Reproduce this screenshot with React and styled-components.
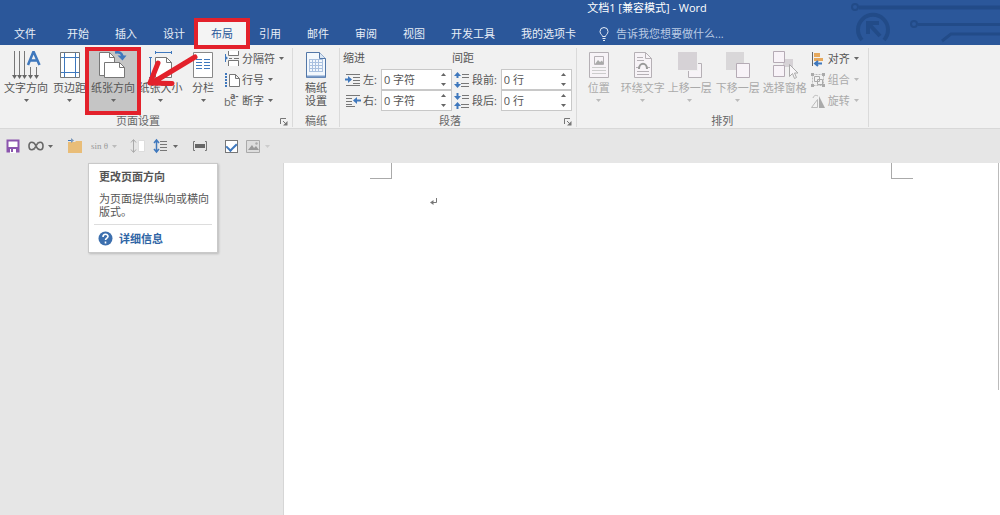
import React from 'react'
import styled, { createGlobalStyle, css } from 'styled-components'

const blue = '#2b579a'
const ink = '#555'
const faded = '#aaa'
const sky = '#3f78bd'

const tabs = ['开始', '插入', '设计', '布局', '引用', '邮件', '审阅', '视图', '开发工具', '我的选项卡']

const Caret = ({ color = '#666' }) => (
  <svg width="5" height="3" viewBox="0 0 5 3"><path d="M0 0h5L2.5 3z" fill={color} /></svg>
)

/* ---------- large icons, 28px box ---------- */
const TextDirection = () => (
  <svg width="30" height="28" viewBox="0 0 30 28" fill="none">
    <path d="M3.500 0v25M8.500 0v25M13.500 0v25M19.500 16v9M25.500 16v9" stroke="#777" />
    <path d="M1 24l2.500 4L6 24zM6 24l2.500 4L11 24zM11 24l2.500 4L16 24zM17 24l2.500 4L22 24zM23 24l2.500 4L28 24z" fill="#666" />
    <path d="M17 14L22.500 0.500 28.500 14M19 9.500h8" stroke={sky} strokeWidth="2.500" />
  </svg>
)
const Margins = () => (
  <svg width="22" height="28" viewBox="0 0 22 28" fill="none">
    <path d="M1.500 1.500h19v25h-19z" fill="#fff" stroke="#777" />
    <path d="M5.500 2v24M16.500 2v24M2 6.500h18M2 21.500h18" stroke={sky} />
  </svg>
)
const Orientation = () => (
  <svg width="30" height="28" viewBox="0 0 30 28" fill="none">
    <path d="M1.500 1.500h10l5 5v18h-15z" fill="#fff" stroke="#777" />
    <path d="M11.500 1.500v5h5" stroke="#777" />
    <path d="M6.500 11.500h15l5 5v10h-20z" fill="#fff" stroke="#777" />
    <path d="M21.500 11.500v5h5" stroke="#777" />
    <path d="M17 1.500c5-1 7 1 7.500 4" stroke={sky} strokeWidth="2.500" />
    <path d="M19.500 4.500h9l-4 5z" fill={sky} />
  </svg>
)
const PaperSize = () => (
  <svg width="26" height="28" viewBox="0 0 26 28" fill="none">
    <path d="M7.500 6.500h11l5 5v15h-16z" fill="#fff" stroke="#777" />
    <path d="M18.500 6.500v5h5" stroke="#777" />
    <path d="M7 1.500h17M7.500 0v3M23.500 0v3M2.500 6v20M1 6.500h3M1 26.500h3" stroke={sky} />
  </svg>
)
const Columns = () => (
  <svg width="22" height="28" viewBox="0 0 22 28" fill="none">
    <path d="M1.500 1.500h19v25h-19z" fill="#fff" stroke="#888" />
    <path d="M4 8.500h6M12 8.500h6M4 11.500h6M12 11.500h6M4 14.500h6M12 14.500h6M4 17.500h6M12 17.500h6" stroke={sky} />
  </svg>
)
const Manuscript = () => (
  <svg width="22" height="28" viewBox="0 0 22 28" fill="none">
    <path d="M1.500 1.500h13l6 6v19h-19z" fill="#f3f8fd" stroke="#5277a8" />
    <path d="M4 8.500h14M4 11.500h14M4 14.500h14M4 17.500h14M4 20.500h14M4.500 8v13M7.500 8v13M10.500 8v13M13.500 8v13M17.500 8v13" stroke="#a9c0df" />
    <path d="M14.500 1.500v6h6" fill="#dce8f5" stroke="#5277a8" />
    <path d="M2 25.500h18" stroke="#7c9dc9" strokeWidth="2" />
  </svg>
)
const Position = () => (
  <svg width="22" height="28" viewBox="0 0 22 28" fill="none">
    <path d="M1.500 1.500h19v25h-19z" fill="#f7f3f7" stroke="#b5b0b5" />
    <path d="M6.500 5.500h9v8h-9z" stroke="#b5b0b5" />
    <path d="M7 13l3-4 2 2 2-1.500 2 3.500z" fill="#aaa" />
    <path d="M4 16.500h14M4 19.500h14M4 22.500h14" stroke="#ccc" />
  </svg>
)
const Wrap = () => (
  <svg width="22" height="28" viewBox="0 0 22 28" fill="none">
    <path d="M2.500 1.500h11l6 6v19h-17z" fill="#f7f3f7" stroke="#b5b0b5" />
    <path d="M13.500 1.500v6h6M5 6.500h6M5 9.500h7M5 20.500h12M5 23.500h12M4 16.500h2M16 16.500h2" stroke="#b5b0b5" />
    <path d="M7 18c0-7 8-7 8 0" stroke="#999" strokeWidth="2" />
  </svg>
)
const Forward = () => (
  <svg width="26" height="28" viewBox="0 0 26 28" fill="none">
    <path d="M11.500 12.500h13v14h-13z" fill="#f7f3f7" stroke="#b5b0b5" />
    <path d="M1 1h20v19H1z" fill="#f1f1f1" />
    <path d="M1 1h19v18H1z" fill="#d6d2d6" />
  </svg>
)
const Backward = () => (
  <svg width="26" height="28" viewBox="0 0 26 28" fill="none">
    <path d="M1 1h18v18H1z" fill="#d9d7d9" />
    <path d="M11.500 12.500h13v14h-13z" fill="#f8f3f8" stroke="#b5abb5" />
  </svg>
)
const Selection = () => (
  <svg width="26" height="28" viewBox="0 0 26 28" fill="none">
    <path d="M11 8h10v8H11z" fill="#d6d2d6" />
    <path d="M1.500 0.500h11v11h-11zM1.500 14.500h11v11h-11z" fill="#f8f3f8" stroke="#b5abb5" />
    <path d="M17.500 13.500v12l3-3 2 5 2-1-2-4.500h3.500z" fill="#f8f6f8" stroke="#aaa" />
  </svg>
)

/* ---------- small icons, 16px box ---------- */
const Small = ({ children }) => <svg width="16" height="16" viewBox="0 0 16 16" fill="none">{children}</svg>

const Breaks = () => (
  <Small>
    <path d="M4.500 0v4.500h10V0M4.500 15v-5.500h10V15" fill="#fff" stroke="#777" />
    <path d="M5 7.500h3M10 7.500h5" stroke="#777" />
    <path d="M1.500 3v8" stroke={sky} /><path d="M1 4.500v5l3-2.500z" fill={sky} />
  </Small>
)
const LineNumbers = () => (
  <Small>
    <path d="M5.500 2.500h6l4 4v8h-10zM11.500 2.500v4h4" fill="#fff" stroke="#777" />
    <path d="M2 1v14" stroke={sky} strokeWidth="2" strokeDasharray="2 1" />
  </Small>
)
const Hyphenation = () => (
  <HyphenIcon width="16" height="16" viewBox="0 0 16 16" fill="#666">
    <text x="0" y="13" fontSize="11">
      bc<tspan x="6" y="6" fontSize="9" fontWeight="bold">a-</tspan>
    </text>
  </HyphenIcon>
)
const Align = () => (
  <Small>
    <path d="M2.500 1v14" stroke="#666" />
    <path d="M4 2h6v4H4zM4 7h9v3H4z" fill="#e6a85c" />
    <path d="M5 12.500h7M8 10l-3 2.500L8 15" stroke={sky} strokeWidth="2" />
  </Small>
)
const GroupIcon = () => (
  <Small>
    <path d="M2.500 2.500h11v11h-11z" stroke="#bbb" strokeDasharray="2 1" />
    <path d="M4.500 4.500h5v5h-5zM7.500 7.500h5v5h-5z" stroke="#aaa" />
    <path d="M1 1h3v3H1zM12 1h3v3h-3zM1 12h3v3H1zM12 12h3v3h-3z" fill="#aaa" />
  </Small>
)
const Rotate = () => (
  <Small>
    <path d="M1.500 14.500h6v-8z" stroke="#bbb" />
    <path d="M9 15V3l6 12z" fill="#aaa" />
    <path d="M3 5c1-3 3-3 5-2" stroke="#bbb" />
  </Small>
)
const IndentLeft = () => (
  <Small>
    <path d="M1 2.500h14M8 5.500h7M8 8.500h7M8 11.500h7M1 13.500h14" stroke="#777" />
    <path d="M0 7.500h5" stroke={sky} strokeWidth="2" /><path d="M3 4l4 3.500L3 11z" fill={sky} />
  </Small>
)
const IndentRight = () => (
  <Small>
    <path d="M1 2.500h14M1 5.500h6M1 8.500h6M1 11.500h6M1 13.500h9" stroke="#777" />
    <path d="M11 7.500h5" stroke={sky} strokeWidth="2" /><path d="M12 4L8 7.500l4 3.500z" fill={sky} />
  </Small>
)
const SpaceBefore = () => (
  <Small>
    <path d="M8 2.500h7M8 5.500h7M7 11.500h8M7 14.500h8" stroke="#777" />
    <path d="M3.500 2v4M3.500 10v4" stroke={sky} strokeWidth="2" />
    <path d="M0 4l3.500-4L7 4zM0 12l3.500 4L7 12z" fill={sky} />
  </Small>
)
const SpaceAfter = () => (
  <Small>
    <path d="M8 2.500h7M8 5.500h7M7 11.500h8M7 14.500h8" stroke="#777" />
    <path d="M3.500 0v4M3.500 12v4" stroke={sky} strokeWidth="2" />
    <path d="M0 3l3.500 4L7 3zM0 13l3.500-4L7 13z" fill={sky} />
  </Small>
)
const Save = () => (
  <Small>
    <path d="M2.500 2.500h11v11h-11z" fill="#fff" stroke="#8b55ae" strokeWidth="2" />
    <path d="M2 9h12v5H2z" fill="#8b55ae" /><path d="M5 11h6v4H5z" fill="#fff" /><path d="M6 11h2v3H6z" fill="#8b55ae" />
  </Small>
)
const Infinity = () => (
  <Small>
    <path d="M8 8C6 3 1 3 1 8s5 5 7 0 7-5 7 0-5 5-7 0z" stroke="#666" strokeWidth="1.600" />
    <path d="M5.500 12l5-8" stroke="#777" />
  </Small>
)
const Folder = () => (
  <Small>
    <path d="M1 4h7l1-1h6v12H1z" fill="#e9bd78" />
    <path d="M1 2.500h4" stroke={sky} /><path d="M4 0l3 2.500L4 5z" fill="#7b98ba" />
  </Small>
)
const PageHeight = () => (
  <Small>
    <path d="M3.500 2v12M1 4.500l2.500-3 2.500 3M1 11.500l2.500 3 2.500-3" stroke="#aaa" />
    <path d="M8.500 2.500h6v11h-6z" fill="#fff" stroke="#ddd" />
  </Small>
)
const LineSpacing = () => (
  <Small>
    <path d="M7 3.500h7M7 6.500h7M7 9.500h7M7 12.500h7" stroke="#777" />
    <path d="M3.500 2v12M1 5l2.500-3L6 5M1 11l2.500 3L6 11" stroke={sky} strokeWidth="1.500" />
  </Small>
)
const FitWidth = () => (
  <Small>
    <path d="M3 3.500H1.500v9H3M13 3.500h1.500v9H13" stroke="#777" />
    <path d="M3 6h10v4H3z" fill="#666" />
  </Small>
)
const Picture = () => (
  <Small>
    <path d="M1.500 2.500h13v12h-13z" fill="#ddd" stroke="#aaa" />
    <path d="M3 12l4-5 2 3 2-2 3 4z" fill="#999" /><circle cx="11.500" cy="5.500" r="1.200" fill="#aaa" />
  </Small>
)

const BigButton = ({ icon, label, second, width, active, off }) => (
  <Big type="button" $width={width} $active={active} $off={off}>
    <Glyph>{icon}</Glyph>
    <span>{label}</span>
    {second ? <span>{second}</span> : <CaretLine>{label !== '选择窗格' && <Caret color={off ? '#bbb' : '#666'} />}</CaretLine>}
    {active && <ButtonRing />}
    {active && (
      <Arrow width="60" height="36" viewBox="0 0 60 36" fill="none">
        <path d="M56 6L13 32M19 12L11 32 33 32.500" stroke="#e3212b" strokeWidth="5" strokeLinecap="round" strokeLinejoin="round" />
      </Arrow>
    )}
  </Big>
)

const SmallButton = ({ icon, label, off }) => (
  <Row type="button" $off={off}>
    {icon}
    <span>{label}</span>
    <Caret color={off ? '#bbb' : '#666'} />
  </Row>
)

const Spin = ({ id, icon, label, value }) => (
  <SpinRow>
    {icon}
    <SpinLabel htmlFor={id}>{label}</SpinLabel>
    <SpinBox>
      <SpinInput id={id} defaultValue={value} />
      <Steps>
        <Step type="button" aria-label={label + '+'}><svg width="5" height="3"><path d="M0 3h5L2.500 0z" fill="#666" /></svg></Step>
        <Step type="button" aria-label={label + '-'}><Caret /></Step>
      </Steps>
    </SpinBox>
  </SpinRow>
)

const GroupFoot = ({ name, launcher }) => (
  <Foot>
    <FootName>{name}</FootName>
    {launcher && (
      <Launcher type="button" aria-label={name}>
        <svg width="8" height="8" viewBox="0 0 8 8" fill="none">
          <path d="M.5 6V.5H6M3 3l3 3" stroke="#777" /><path d="M7.500 3v4.500H3z" fill="#777" />
        </svg>
      </Launcher>
    )}
  </Foot>
)

const App = () => {
  return (
    <Window>
      <GlobalStyle />
      <Header>
        <Circuit width="150" height="45" viewBox="0 0 150 45" fill="none" stroke="#224b88">
          <circle cx="5" cy="7" r="3" strokeWidth="2" />
          <path d="M9 7.500h141" strokeWidth="4" />
          <circle cx="64" cy="24" r="3" strokeWidth="2" />
          <path d="M68 24.500h82M92 41l9-7h49" strokeWidth="3" />
          <path d="M12 40a15 15 0 1 1 22 0" strokeWidth="4" />
          <path d="M18 34V23h11M18 23l12 13" strokeWidth="4" />
        </Circuit>
        <Title>文档1 [兼容模式] - Word</Title>
        <Tabs>
          <FileTab type="button">文件</FileTab>
          {tabs.map(t => (
            <Tab type="button" key={t} $active={t === '布局'}>
              {t}
              {t === '布局' && <TabRing />}
            </Tab>
          ))}
          <Tell>
            <svg width="10" height="14" viewBox="0 0 10 14" fill="none" stroke="#e5ecf6">
              <path d="M3.500 9.500C3.500 8 1 7 1 4.500a4 4 0 0 1 8 0C9 7 6.500 8 6.500 9.500zM3.500 11.500h3M4 13.500h2" />
            </svg>
            <TellInput aria-label="告诉我您想要做什么" placeholder="告诉我您想要做什么..." />
          </Tell>
        </Tabs>
      </Header>

      <Ribbon>
        <Group>
          <Body $start={2} $end={8}>
            <BigButton icon={<TextDirection />} label="文字方向" width={48} />
            <BigButton icon={<Margins />} label="页边距" width={39} />
            <BigButton icon={<Orientation />} label="纸张方向" width={48} active />
            <BigButton icon={<PaperSize />} label="纸张大小" width={47} />
            <BigButton icon={<Columns />} label="分栏" width={38} />
            <Stack>
              <SmallButton icon={<Breaks />} label="分隔符" />
              <SmallButton icon={<LineNumbers />} label="行号" />
              <SmallButton icon={<Hyphenation />} label="断字" />
            </Stack>
          </Body>
          <GroupFoot name="页面设置" launcher />
        </Group>
        <Group>
          <Body>
            <BigButton icon={<Manuscript />} label="稿纸" second="设置" width={46} />
          </Body>
          <GroupFoot name="稿纸" />
        </Group>
        <Group>
          <Body $start={3} $end={4}>
            <Fields>
              <FieldsTitle>缩进</FieldsTitle>
              <Spin id="left" icon={<IndentLeft />} label="左:" value="0 字符" />
              <Spin id="right" icon={<IndentRight />} label="右:" value="0 字符" />
            </Fields>
            <Fields>
              <FieldsTitle>间距</FieldsTitle>
              <Spin id="before" icon={<SpaceBefore />} label="段前:" value="0 行" />
              <Spin id="after" icon={<SpaceAfter />} label="段后:" value="0 行" />
            </Fields>
          </Body>
          <GroupFoot name="段落" launcher />
        </Group>
        <Group>
          <Body $start={1} $end={9}>
            <BigButton icon={<Position />} label="位置" width={42} off />
            <BigButton icon={<Wrap />} label="环绕文字" width={46} off />
            <BigButton icon={<Forward />} label="上移一层" width={48} off />
            <BigButton icon={<Backward />} label="下移一层" width={48} off />
            <BigButton icon={<Selection />} label="选择窗格" width={46} off />
            <Stack>
              <SmallButton icon={<Align />} label="对齐" />
              <SmallButton icon={<GroupIcon />} label="组合" off />
              <SmallButton icon={<Rotate />} label="旋转" off />
            </Stack>
          </Body>
          <GroupFoot name="排列" />
        </Group>
      </Ribbon>

      <QuickBar>
        <Quick type="button" aria-label="保存"><Save /></Quick>
        <Quick type="button" aria-label="符号" $gap={7}><Infinity /><Caret /></Quick>
        <Quick type="button" aria-label="打开" $gap={14}><Folder /></Quick>
        <Quick type="button" $gap={8}><Sin>sin θ</Sin><Caret color="#bbb" /></Quick>
        <Quick type="button" aria-label="高度" $gap={13}><PageHeight /></Quick>
        <Quick type="button" aria-label="行距" $gap={7}><LineSpacing /><Caret /></Quick>
        <Quick type="button" aria-label="宽度" $gap={14}><FitWidth /></Quick>
        <Check aria-label="复选框" defaultChecked />
        <Quick type="button" aria-label="图片" $gap={7}><Picture /><Caret color="#ccc" /></Quick>
      </QuickBar>

      <Workspace>
        <Gutter>
          <Tip role="tooltip">
            <TipTitle>更改页面方向</TipTitle>
            <TipText>为页面提供纵向或横向版式。</TipText>
            <TipLink href="#help">
              <svg width="15" height="15" viewBox="0 0 15 15" fill="none">
                <circle cx="7.500" cy="7.500" r="7" fill="#3c6fae" />
                <path d="M5 6c0-3.500 5-3.500 5-.500 0 1.500-2.500 1.700-2.500 3.500M7.500 10.500v2" stroke="#fff" strokeWidth="1.600" />
              </svg>
              详细信息
            </TipLink>
          </Tip>
        </Gutter>
        <Page>
          <Marks>
            <Mark $side="right" />
            <Mark $side="left" />
          </Marks>
          <Paragraph>
            <svg width="8" height="8" viewBox="0 0 8 8" fill="none">
              <path d="M6.500 0v4.500H2" stroke="#777" /><path d="M0 4.500L3.500 2v5z" fill="#777" />
            </svg>
          </Paragraph>
        </Page>
        <Edge />
      </Workspace>
    </Window>
  )
}

export default App

const GlobalStyle = createGlobalStyle`
  * { box-sizing: border-box; }
  body { margin: 0; background: #e6e6e6; }
  body, button, input {
    font-family: "Open Sans", "Noto Sans CJK SC", sans-serif;
    font-size: 11px;
    line-height: 13px;
  }
  button { border: 0; padding: 0; background: none; color: inherit; }
  svg { display: block; flex: none; }
`

const Window = styled.div`
  display: flex;
  flex-direction: column;
  min-height: 100vh;
  overflow: hidden;
  color: ${ink};
`

const Header = styled.header`
  position: relative;
  z-index: 2;
  background: ${blue};
  color: #e8eef7;
`

const Circuit = styled.svg`
  position: absolute;
  top: 0;
  right: 0;
`

const Title = styled.div`
  padding: 0 0 7px 294px;
  line-height: 15px;
  text-align: center;
  color: #fff;
`

const Tabs = styled.nav`
  display: flex;
  height: 23px;
`

const Tab = styled.button`
  position: relative;
  padding: 0 13px;
  white-space: nowrap;
  ${p => p.$active && css`
    background: #f4f4f4;
    color: ${blue};
  `}
`

const FileTab = styled(Tab)`
  padding: 0 14px;
  margin-right: 4px;
`

const TabRing = styled.span`
  position: absolute;
  inset: -4px;
  border: 4px solid #e3212b;
`

const Tell = styled.div`
  display: flex;
  align-items: center;
  gap: 7px;
  margin-left: 10px;
`

const TellInput = styled.input`
  width: 130px;
  padding: 0;
  border: 0;
  outline: 0;
  background: none;
  color: #fff;
  &::placeholder { color: #b9cae4; }
`

const Ribbon = styled.section`
  display: flex;
  padding: 3px 0 1px;
  background: #f1f1f1;
  border-bottom: 1px solid #d8d8d8;
`

const Group = styled.div`
  display: flex;
  flex-direction: column;
  border-right: 1px solid #dadada;
`

const Body = styled.div`
  display: flex;
  height: 65px;
  padding-left: ${p => p.$start || 0}px;
  padding-right: ${p => p.$end || 0}px;
`

const Big = styled.button`
  position: relative;
  display: flex;
  flex-direction: column;
  align-items: center;
  width: ${p => p.$width}px;
  padding-top: 3px;
  white-space: nowrap;
  color: ${p => (p.$off ? faded : ink)};
  background: ${p => (p.$active ? '#c5c5c5' : 'none')};
`

const Glyph = styled.span`
  display: flex;
  height: 28px;
  margin-bottom: 2px;
`

const CaretLine = styled.span`
  display: flex;
  align-items: center;
  height: 13px;
`

const ButtonRing = styled.span`
  position: absolute;
  z-index: 1;
  inset: -1px -4px -2px;
  border: 4px solid #e3212b;
`

const Arrow = styled.svg`
  position: absolute;
  z-index: 1;
  top: 3px;
  left: 50px;
`

const HyphenIcon = styled.svg`
  overflow: visible;
`

const Stack = styled.div`
  display: flex;
  flex-direction: column;
  padding-left: 2px;
`

const Row = styled.button`
  display: flex;
  align-items: center;
  gap: 2px;
  height: 21px;
  white-space: nowrap;
  color: ${p => (p.$off ? faded : ink)};
  & > span + svg { margin-left: 2px; }
`

const Fields = styled.div`
  display: flex;
  flex-direction: column;
`

const FieldsTitle = styled.div`
  line-height: 19px;
  height: 21px;
`

const SpinRow = styled.div`
  display: flex;
  align-items: center;
  height: 21px;
  padding-left: 2px;
`

const SpinLabel = styled.label`
  padding: 0 4px 0 2px;
`

const SpinBox = styled.div`
  display: flex;
  width: 71px;
  height: 21px;
  background: #fff;
  border: 1px solid #c8c8c8;
`

const SpinInput = styled.input`
  flex: 1;
  min-width: 0;
  padding: 0 2px;
  border: 0;
  outline: 0;
  background: none;
  color: ${ink};
`

const Steps = styled.div`
  display: flex;
  flex-direction: column;
  width: 14px;
`

const Step = styled.button`
  display: flex;
  flex: 1;
  align-items: center;
  justify-content: center;
`

const Foot = styled.div`
  display: flex;
  align-items: center;
  height: 14px;
  color: #666;
`

const FootName = styled.span`
  flex: 1;
  text-align: center;
`

const Launcher = styled.button`
  width: 16px;
  padding: 3px 4px 0;
`

const QuickBar = styled.div`
  display: flex;
  align-items: center;
  height: 34px;
  padding-left: 5px;
`

const Quick = styled.button`
  display: flex;
  align-items: center;
  gap: 4px;
  margin-left: ${p => p.$gap || 0}px;
`

const Sin = styled.span`
  font-family: "Liberation Serif", serif;
  font-size: 9px;
  color: #999;
`

const Check = styled.input.attrs({ type: 'checkbox' })`
  appearance: none;
  display: grid;
  place-items: center;
  width: 13px;
  height: 13px;
  margin: 0 0 0 17px;
  background: #fff;
  border: 1px solid #777;
  &:checked::after {
    content: '';
    width: 5px;
    height: 8px;
    margin-bottom: 2px;
    border: solid ${sky};
    border-width: 0 2px 2px 0;
    transform: rotate(45deg);
  }
`

const Workspace = styled.main`
  display: flex;
  flex: 1;
`

const Gutter = styled.aside`
  width: 284px;
  padding-left: 88px;
  border-right: 1px solid #d6d6d6;
`

const Tip = styled.div`
  width: 130px;
  padding: 6px 5px 0;
  background: #fff;
  border: 1px solid #c9c9c9;
  box-shadow: 1px 1px 2px #bbb;
`

const TipTitle = styled.div`
  padding: 0 5px 9px;
  font-weight: bold;
`

const TipText = styled.div`
  padding: 0 0 6px 5px;
  border-bottom: 1px solid #ddd;
`

const TipLink = styled.a`
  display: flex;
  align-items: center;
  gap: 6px;
  height: 27px;
  padding-left: 4px;
  color: #2f65a5;
  font-weight: bold;
  text-decoration: none;
`

const Page = styled.article`
  flex: 1;
  background: #fff;
`

const Marks = styled.div`
  display: flex;
  justify-content: space-between;
  padding: 0 85px 0 86px;
`

const Mark = styled.div`
  width: 22px;
  height: 16px;
  border-bottom: 1px solid #aaa;
  border-${p => p.$side}: 1px solid #aaa;
`

const Paragraph = styled.div`
  padding: 19px 146px;
`

const Edge = styled.div`
  width: 2px;
  background: #fff;
  &::before {
    content: '';
    display: block;
    width: 1px;
    height: 227px;
    background: #bbb;
  }
`
